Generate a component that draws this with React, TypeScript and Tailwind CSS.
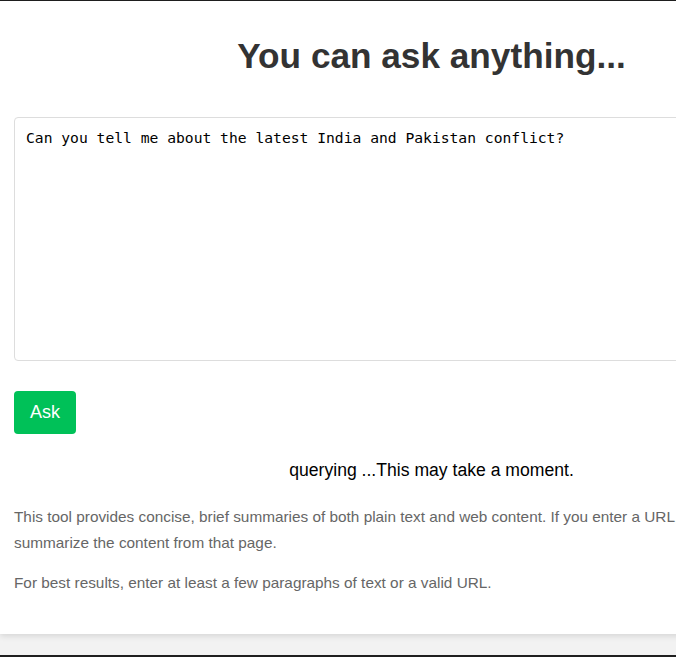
export default function App() {
  return (
    <div className="relative h-[657px] w-[676px] overflow-hidden bg-[#f2f2f2] font-['Liberation_Sans',Arial,sans-serif]">
      <div className="h-px bg-[#1f1f1f]" />
      <div className="w-[863px] bg-white px-[14px] pb-[38px] pt-[20px] shadow-[0_2px_6px_rgba(0,0,0,0.12)]">
        <h1 className="text-center text-[35.2px] font-bold leading-[70px] text-[#333]">You can ask anything...</h1>

        <textarea
          readOnly
          defaultValue="Can you tell me about the latest India and Pakistan conflict?"
          className="mt-[26px] block h-[244px] w-[835px] resize-none rounded-[4px] border border-[#ddd] px-[11px] pb-[10px] pt-[11px] font-['DejaVu_Sans_Mono',monospace] text-[14.67px] leading-[17px] text-black outline-none"
        />

        <button className="mt-[30px] block h-[43px] rounded-[4px] bg-[#00c158] px-[16px] text-[18px] text-white">
          Ask
        </button>

        <div className="mt-[25px] text-center text-[17.6px] leading-[22px] text-black">
          querying ...This may take a moment.
        </div>

        <div className="mt-[23px] max-w-[760px] text-[15.35px] leading-[26px] text-[#666]">
          <p>
            This tool provides concise, brief summaries of both plain text and web content. If you enter a URL, it will
            summarize the content from that page.
          </p>
          <p className="mt-[14px]">For best results, enter at least a few paragraphs of text or a valid URL.</p>
        </div>
      </div>
      <div className="absolute bottom-0 left-0 h-[2px] w-full bg-[#1f1f1f]" />
    </div>
  );
}
